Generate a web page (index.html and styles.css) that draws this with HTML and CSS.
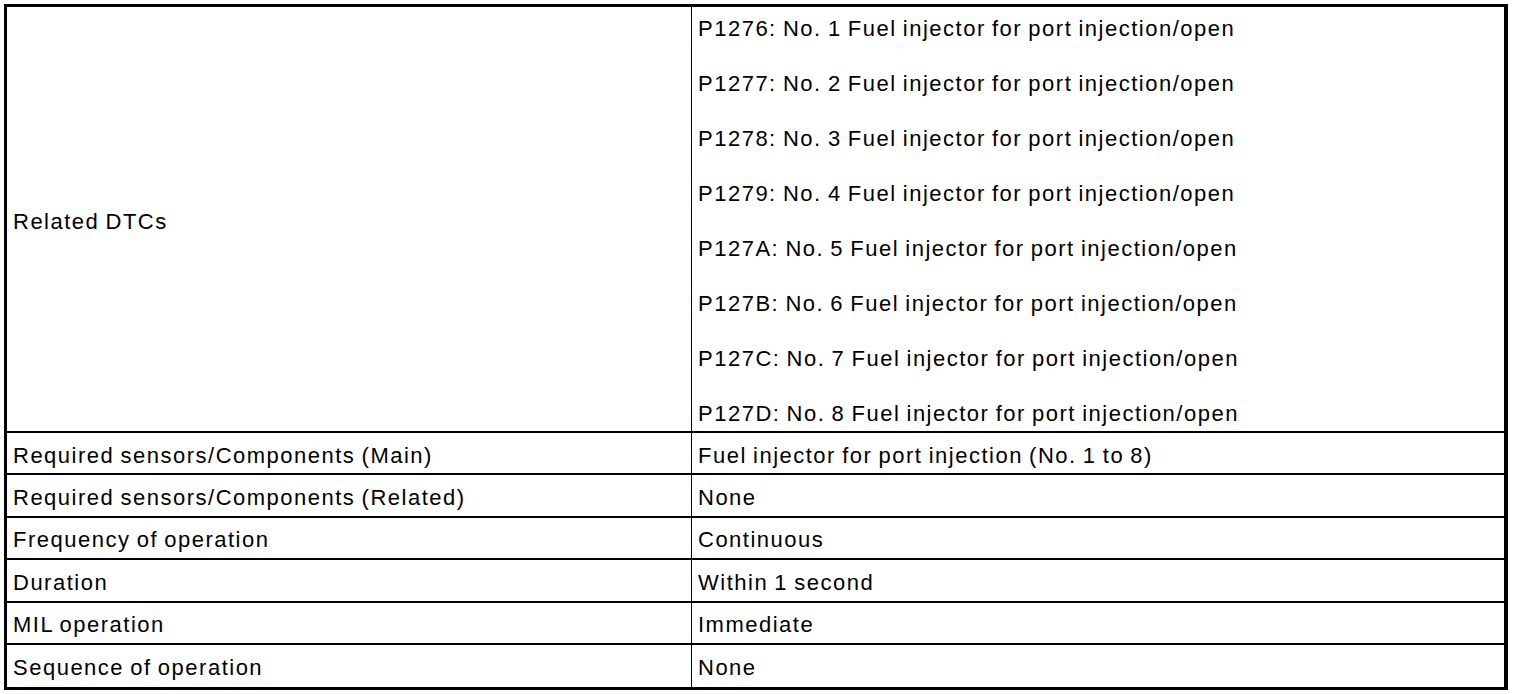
FILE: index.html
```html
<!DOCTYPE html>
<html>
<head>
<meta charset="utf-8">
<link rel="stylesheet" href="styles.css">
</head>
<body>
<table class="spec">
  <tr class="row-dtc">
    <td class="label">Related DTCs</td>
    <td class="value">
      <div class="dtc-list">
        <div>P1276: No. 1 Fuel injector for port injection/open</div>
        <div>P1277: No. 2 Fuel injector for port injection/open</div>
        <div>P1278: No. 3 Fuel injector for port injection/open</div>
        <div>P1279: No. 4 Fuel injector for port injection/open</div>
        <div>P127A: No. 5 Fuel injector for port injection/open</div>
        <div>P127B: No. 6 Fuel injector for port injection/open</div>
        <div>P127C: No. 7 Fuel injector for port injection/open</div>
        <div>P127D: No. 8 Fuel injector for port injection/open</div>
      </div>
    </td>
  </tr>
  <tr class="row">
    <td class="label">Required sensors/Components (Main)</td>
    <td class="value">Fuel injector for port injection (No. 1 to 8)</td>
  </tr>
  <tr class="row">
    <td class="label">Required sensors/Components (Related)</td>
    <td class="value">None</td>
  </tr>
  <tr class="row">
    <td class="label">Frequency of operation</td>
    <td class="value">Continuous</td>
  </tr>
  <tr class="row">
    <td class="label">Duration</td>
    <td class="value">Within 1 second</td>
  </tr>
  <tr class="row">
    <td class="label">MIL operation</td>
    <td class="value">Immediate</td>
  </tr>
  <tr class="row last">
    <td class="label">Sequence of operation</td>
    <td class="value">None</td>
  </tr>
</table>
</body>
</html>
```
FILE: styles.css
```css
html, body {
  margin: 0;
  padding: 0;
  background: #fff;
}

.spec {
  margin: 4px 0 0 4px;
  width: 1504px;
  border: 3px solid #000;
  border-right-width: 4px;
  border-collapse: separate;
  border-spacing: 0;
  font-family: "Liberation Sans", Arial, sans-serif;
  font-size: 22px;
  letter-spacing: 1.5px;
  word-spacing: -1.4px;
  color: #000;
  table-layout: fixed;
}

.spec td {
  padding: 0 6px;
  border-bottom: 2px solid #000;
  vertical-align: middle;
  line-height: 22px;
  white-space: nowrap;
}

.spec td.label {
  width: 672px;
  border-right: 1px solid #000;
}

.row-dtc td {
  height: 407px;
}

.row-dtc .label {
  padding-top: 5px;
  height: 402px;
}

.row-dtc .value {
  padding-top: 11px;
  padding-bottom: 6px;
  vertical-align: top;
}

.dtc-list {
  display: flex;
  flex-direction: column;
  gap: 33px;
}

.row td {
  height: 35.4px;
  padding-top: 5px;
}

.row.last td {
  height: 37px;
  border-bottom: none;
}
```
